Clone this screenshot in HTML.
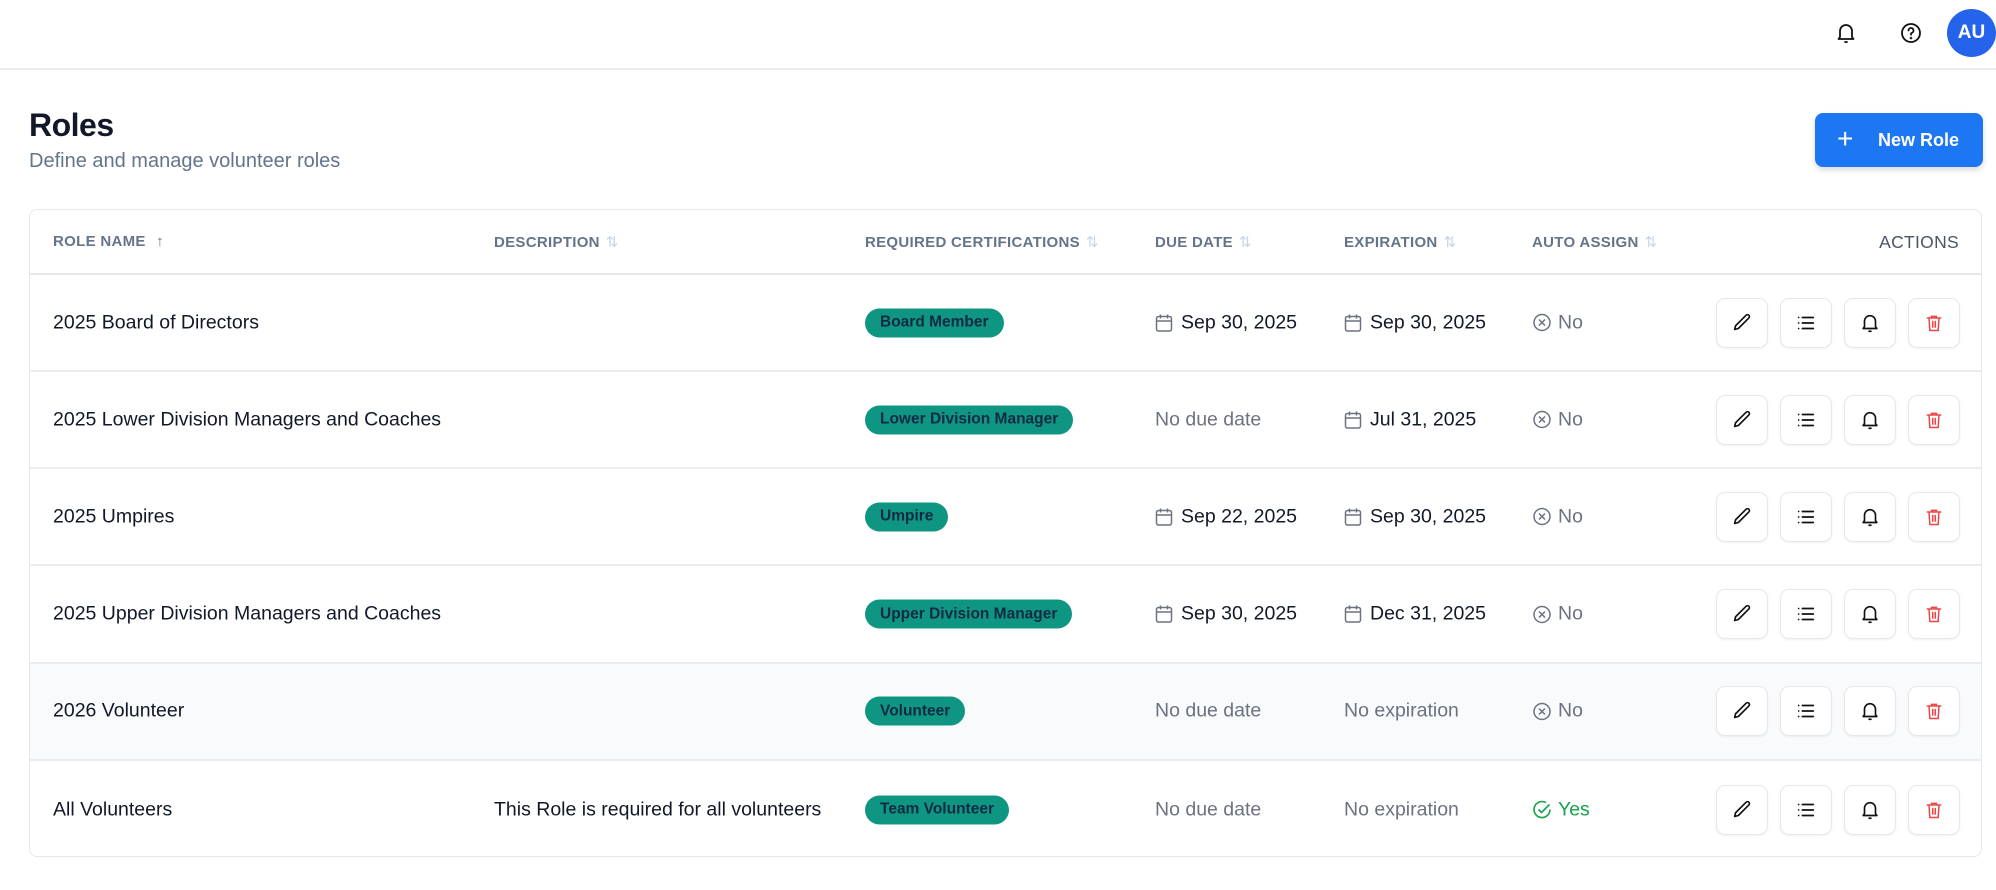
<!DOCTYPE html>
<html><head><meta charset="utf-8"><style>
*{box-sizing:border-box;margin:0;padding:0}
body{width:1996px;height:890px;background:#fff;font-family:"Liberation Sans",sans-serif;color:#111827;position:relative;overflow:hidden}
.abs{position:absolute}
.topbar{position:absolute;left:0;top:0;width:1996px;height:70px;border-bottom:2px solid #ececec}
.avatar{position:absolute;left:1947px;top:9px;width:49px;height:48px;border-radius:50%;background:#2563eb;color:#fff;font-size:19px;font-weight:bold;display:flex;align-items:center;justify-content:center}
h1{position:absolute;left:29px;top:107px;font-size:32px;font-weight:bold;letter-spacing:-0.5px}
.sub{position:absolute;left:29px;top:150px;font-size:20px;color:#64748b}
.btn{position:absolute;left:1815px;top:113px;width:168px;height:54px;background:#1d76f2;border-radius:8px;color:#fff;font-size:18px;font-weight:bold;box-shadow:0 3px 6px rgba(0,0,0,.15)}
.table{position:absolute;left:29px;top:209px;width:1953px;height:648px;border:1.5px solid #e5e7eb;border-radius:8px;overflow:hidden}
.hd{position:absolute;top:0;left:0;right:0;height:65px;border-bottom:2px solid #e5e7eb}
.th{position:absolute;top:23px;font-size:15px;font-weight:bold;color:#64748b;letter-spacing:.3px}
.th .s{color:#cbd5e1;font-weight:normal;margin-left:6px}
.row{position:absolute;left:0;right:0;height:97px;border-bottom:2px solid #ececec}
.c{position:absolute;top:50%;transform:translateY(-50%);font-size:19.5px;white-space:nowrap;display:flex;align-items:center}
.muted{color:#6b7280}
.badge{background:#0f9682;color:#102a43;font-size:15.5px;font-weight:bold;padding:0 15px;height:29px;border-radius:15px;display:flex;align-items:center}
.ab{position:absolute;top:50%;transform:translateY(-50%);width:52px;height:50px;border:1.5px solid #e5e7eb;border-radius:9px;background:#fff;box-shadow:0 1px 2px rgba(0,0,0,.06);display:flex;align-items:center;justify-content:center}
svg{display:block}
</style></head><body>
<div class="topbar">
<svg class="abs" style="left:1834px;top:21px" width="24" height="24" viewBox="0 0 24 24" fill="none" stroke="#111" stroke-width="1.8" stroke-linecap="round" stroke-linejoin="round"><path d="M6 16V10a6 6 0 0 1 12 0v6l1.5 2h-15z"/><path d="M11 21h2"/></svg>
<svg class="abs" style="left:1899px;top:21px" width="24" height="24" viewBox="0 0 24 24" fill="none" stroke="#111" stroke-width="1.8" stroke-linecap="round"><circle cx="12" cy="12" r="9"/><path d="M9.5 9.5a2.5 2.5 0 1 1 3.5 2.3c-.7.3-1 .8-1 1.5v.4"/><circle cx="12" cy="17" r=".4" fill="#111"/></svg>
<div class="avatar">AU</div>
</div>
<h1>Roles</h1>
<div class="sub">Define and manage volunteer roles</div>
<div class="btn"><span class="abs" style="left:22px;top:12px;font-size:28px;font-weight:normal;line-height:28px">+</span><span class="abs" style="left:63px;top:17px">New Role</span></div>

<div class="table">
<div class="hd">
<div class="th" style="left:23px">ROLE NAME <span class="s" style="color:#64748b">↑</span></div>
<div class="th" style="left:464px">DESCRIPTION<span class="s">⇅</span></div>
<div class="th" style="left:835px">REQUIRED CERTIFICATIONS<span class="s">⇅</span></div>
<div class="th" style="left:1125px">DUE DATE<span class="s">⇅</span></div>
<div class="th" style="left:1314px">EXPIRATION<span class="s">⇅</span></div>
<div class="th" style="left:1502px">AUTO ASSIGN<span class="s">⇅</span></div>
<div class="th" style="right:22px;font-size:17.5px;font-weight:normal;top:22px;color:#4b5563">ACTIONS</div>
</div>
<div id="rows"></div>
</div>
<script>
var cal='<svg width="18" height="19" viewBox="0 0 18 19" fill="none" stroke="#6b7280" stroke-width="1.5" style="margin-right:8px"><rect x="1.5" y="3" width="15" height="14.5" rx="2"/><path d="M1.5 7.5h15M5.5 1v4M12.5 1v4"/></svg>';
var no='<svg width="20" height="20" viewBox="0 0 20 20" fill="none" stroke="#6b7280" stroke-width="1.5" style="margin-right:6px"><circle cx="10" cy="10" r="8"/><path d="M7 7l6 6M13 7l-6 6"/></svg>';
var yes='<svg width="20" height="20" viewBox="0 0 20 20" fill="none" stroke="#16a34a" stroke-width="1.6" style="margin-right:6px"><path d="M18 10a8 8 0 1 1-4-6.9"/><path d="M6.5 10l3 3 8-8"/></svg>';
var icons=[
'<svg width="22" height="22" viewBox="0 0 24 24" fill="none" stroke="#111" stroke-width="1.8" stroke-linejoin="round"><path d="M16.5 3.5a2.1 2.1 0 0 1 3 3L8 18l-4 1 1-4z"/></svg>',
'<svg width="22" height="22" viewBox="0 0 24 24" fill="none" stroke="#111" stroke-width="1.8" stroke-linecap="round"><path d="M8 6h12M8 12h12M8 18h12M4 6h.01M4 12h.01M4 18h.01"/></svg>',
'<svg width="22" height="22" viewBox="0 0 24 24" fill="none" stroke="#111" stroke-width="1.8" stroke-linecap="round" stroke-linejoin="round"><path d="M6 16V10a6 6 0 0 1 12 0v6l1.5 2h-15z"/><path d="M11 21h2"/></svg>',
'<svg width="20" height="20" viewBox="0 0 24 24" fill="none" stroke="#ef4444" stroke-width="1.8" stroke-linecap="round"><path d="M4 6h16M9 6V4h6v2M6 6l1 15h10l1-15M10.5 10v7M13.5 10v7"/></svg>'];
var data=[
["2025 Board of Directors","","Board Member",cal+"Sep 30, 2025",cal+"Sep 30, 2025",0],
["2025 Lower Division Managers and Coaches","","Lower Division Manager","<span class='muted'>No due date</span>",cal+"Jul 31, 2025",0],
["2025 Umpires","","Umpire",cal+"Sep 22, 2025",cal+"Sep 30, 2025",0],
["2025 Upper Division Managers and Coaches","","Upper Division Manager",cal+"Sep 30, 2025",cal+"Dec 31, 2025",0],
["2026 Volunteer","","Volunteer","<span class='muted'>No due date</span>","<span class='muted'>No expiration</span>",0],
["All Volunteers","This Role is required for all volunteers","Team Volunteer","<span class='muted'>No due date</span>","<span class='muted'>No expiration</span>",1]];
var h='';
data.forEach(function(d,i){
var top=65+i*97.2;
h+='<div class="row" style="top:'+top+'px;'+(i==4?'background:#f8fafc;':'')+(i==5?'border-bottom:none;':'')+'">'+
'<div class="c" style="left:23px">'+d[0]+'</div>'+
'<div class="c" style="left:464px">'+d[1]+'</div>'+
'<div class="c" style="left:835px"><span class="badge">'+d[2]+'</span></div>'+
'<div class="c" style="left:1125px">'+d[3]+'</div>'+
'<div class="c" style="left:1314px">'+d[4]+'</div>'+
'<div class="c" style="left:1502px">'+(d[5]?yes+'<span style="color:#16a34a">Yes</span>':no+'<span class="muted">No</span>')+'</div>';
for(var k=0;k<4;k++)h+='<div class="ab" style="left:'+(1686+k*64)+'px">'+icons[k]+'</div>';
h+='</div>';});
document.getElementById('rows').innerHTML=h;
</script>
</body></html>
